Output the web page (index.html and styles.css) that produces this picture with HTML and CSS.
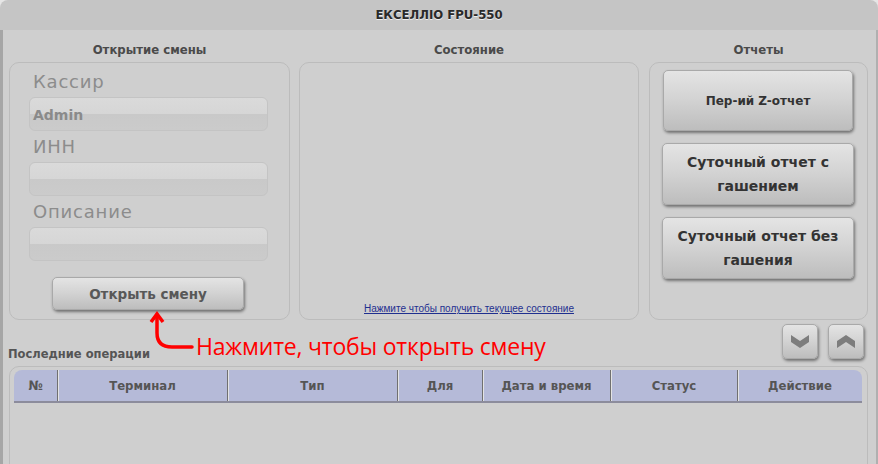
FILE: index.html
```html
<!DOCTYPE html>
<html lang="ru">
<head>
  <meta charset="UTF-8">
  <title>ЕКСЕЛЛІО FPU-550</title>
  <link rel="stylesheet" href="styles.css">
</head>
<body>
  <div class="window">
    <div class="titlebar">ЕКСЕЛЛІО FPU-550</div>
    <div class="main">
      <div class="columns">
        <div class="col col-shift">
          <div class="col-title">Открытие смены</div>
          <div class="panel shift-panel">
            <div class="field-label">Кассир</div>
            <div class="field">Admin</div>
            <div class="field-label">ИНН</div>
            <div class="field"></div>
            <div class="field-label">Описание</div>
            <div class="field"></div>
            <button class="btn open-btn">Открыть смену</button>
          </div>
        </div>
        <div class="col col-state">
          <div class="col-title">Состояние</div>
          <div class="panel state-panel">
            <a href="#" class="state-link">Нажмите чтобы получить текущее состояние</a>
          </div>
        </div>
        <div class="col col-reports">
          <div class="col-title">Отчеты</div>
          <div class="panel reports-panel">
            <button class="btn report-btn small">Пер-ий Z-отчет</button>
            <button class="btn report-btn">Суточный отчет с гашением</button>
            <button class="btn report-btn">Суточный отчет без гашения</button>
          </div>
        </div>
      </div>

      <div class="ops-bar">
        <div class="ops-title">Последние операции</div>
        <div class="scroll-btns">
          <button class="btn arrow-btn">
            <svg width="18" height="13" viewBox="0 0 18 13"><polygon points="0,0 9,6 18,0 18,7 9,13 0,7" fill="#7d7d7d"/></svg>
          </button>
          <button class="btn arrow-btn">
            <svg width="18" height="13" viewBox="0 0 18 13"><polygon points="0,13 9,7 18,13 18,6 9,0 0,6" fill="#7d7d7d"/></svg>
          </button>
        </div>
      </div>

      <div class="panel table-panel">
        <div class="table-head">
          <div class="th w-num">№</div>
          <div class="th w-term">Терминал</div>
          <div class="th w-type">Тип</div>
          <div class="th w-for">Для</div>
          <div class="th w-date">Дата и время</div>
          <div class="th w-status">Статус</div>
          <div class="th w-action">Действие</div>
        </div>
      </div>

      <div class="hint">
        <svg class="hint-arrow" width="60" height="50" viewBox="0 0 60 50">
          <path d="M12 10 L12 28 Q12 42 27 42 L47 42" fill="none" stroke="#f00" stroke-width="3.5" stroke-linecap="round"/>
          <polyline points="6,17 12,9 18,17" fill="none" stroke="#f00" stroke-width="3.5" stroke-linejoin="miter"/>
        </svg>
        <span class="hint-text">Нажмите, чтобы открыть смену</span>
      </div>
    </div>
  </div>
</body>
</html>
```

FILE: styles.css
```css
body {
  margin: 0;
  background-color: #e6e6e6;
  font-family: "DejaVu Sans", sans-serif;
}

.window {
  width: 878px;
  height: 464px;
  overflow: hidden;
  position: relative;
}

.titlebar {
  height: 30px;
  line-height: 30px;
  text-align: center;
  background-color: #c5c5c5;
  border-radius: 8px 8px 0 0;
  font-family: "DejaVu Sans Condensed", "DejaVu Sans", sans-serif;
  font-weight: bold;
  font-size: 13px;
  color: #2a2a2a;
  text-shadow: 0 1px 0 #eee;
}

.main {
  height: 434px;
  background-color: #cfcfcf;
  border-left: 3px solid #a6a6a6;
  border-right: 2px solid #b0b0b0;
  padding: 0 8px 0 6px;
}

.columns {
  display: flex;
}

.col-shift { width: 281px; margin-right: 9px; }
.col-state { width: 340px; margin-right: 10px; }
.col-reports { width: 219px; }

.col-title {
  height: 32px;
  line-height: 39px;
  text-align: center;
  font-family: "DejaVu Sans Condensed", "DejaVu Sans", sans-serif;
  font-weight: bold;
  font-size: 13px;
  color: #4a4a4a;
}

.panel {
  border: 1px solid #bcbcbc;
  border-radius: 10px;
  box-sizing: border-box;
}

.shift-panel {
  height: 258px;
  padding: 9px 21px 0 19px;
}

.field-label {
  height: 20px;
  line-height: 20px;
  padding-left: 4px;
  margin-bottom: 5px;
  font-family: "DejaVu Sans", sans-serif;
  font-size: 18px;
  letter-spacing: 0.8px;
  color: #8c8c8c;
}

.field {
  height: 34px;
  line-height: 34px;
  margin-bottom: 6px;
  padding-left: 3px;
  box-sizing: border-box;
  border: 1px solid #c4c4c4;
  border-radius: 6px;
  background: linear-gradient(#dadada 0, #d6d6d6 50%, #c9c9c9 50%, #cbcbcb 100%);
  font-weight: bold;
  font-size: 14px;
  color: #8a8a8a;
}

.btn {
  display: block;
  border: 1px solid #a9a9a9;
  border-radius: 5px;
  background: linear-gradient(#e4e4e4, #d2d2d2 50%, #bdbdbd);
  box-shadow: 1px 2px 3px rgba(0, 0, 0, 0.45);
  font-family: "DejaVu Sans", sans-serif;
  font-weight: bold;
  color: #333;
  cursor: pointer;
  padding: 0;
}

.open-btn {
  width: 192px;
  height: 33px;
  margin: 16px 0 0 23px;
  font-size: 13.5px;
  color: #585858;
}

.state-panel {
  height: 258px;
  display: flex;
  flex-direction: column;
  justify-content: flex-end;
  align-items: center;
  padding-bottom: 5px;
}

.state-link {
  font-family: "Liberation Sans", sans-serif;
  font-size: 10px;
  color: #1f2f8f;
}

.reports-panel {
  height: 258px;
  padding: 7px 0 0 12px;
}

.report-btn {
  width: 192px;
  height: 62px;
  margin-bottom: 12px;
  font-size: 14px;
  line-height: 24px;
}

.report-btn.small {
  width: 190px;
  margin-left: 1px;
  height: 61px;
  font-size: 12px;
}

.ops-bar {
  height: 46px;
  display: flex;
  justify-content: space-between;
  align-items: flex-start;
}

.ops-title {
  margin-top: 27px;
  margin-left: -1px;
  font-weight: bold;
  font-size: 11.5px;
  color: #555;
}

.scroll-btns {
  display: flex;
  gap: 10px;
  margin-top: 4px;
  margin-right: 4px;
}

.arrow-btn {
  width: 36px;
  height: 35px;
  display: flex;
  align-items: center;
  justify-content: center;
}

.table-panel {
  height: 120px;
  padding: 3px 5px 0 4px;
  border-radius: 10px 10px 0 0;
}

.table-head {
  display: flex;
  height: 31px;
  background-color: #b5bad8;
  border-radius: 8px 8px 0 0;
  border-bottom: 2px solid #8c8c9c;
}

.th {
  line-height: 31px;
  text-align: center;
  font-family: "DejaVu Sans Condensed", "DejaVu Sans", sans-serif;
  font-weight: bold;
  font-size: 13px;
  color: #555;
  border-left: 1px solid #707070;
  box-shadow: inset 1px 0 0 #e4e4e4;
  box-sizing: border-box;
}

.th:first-child {
  border-left: none;
  box-shadow: none;
}

.w-num { width: 43px; }
.w-term { width: 170px; }
.w-type { width: 170px; }
.w-for { width: 85px; }
.w-date { width: 128px; }
.w-status { width: 127px; }
.w-action { flex: 1; }

.hint {
  position: absolute;
  left: 145px;
  top: 305px;
  display: flex;
  align-items: flex-start;
}

.hint-text {
  margin-top: 26px;
  margin-left: -9px;
  font-family: "Open Sans", sans-serif;
  font-size: 23px;
  letter-spacing: -0.2px;
  line-height: 30px;
  color: #f00;
}
```
